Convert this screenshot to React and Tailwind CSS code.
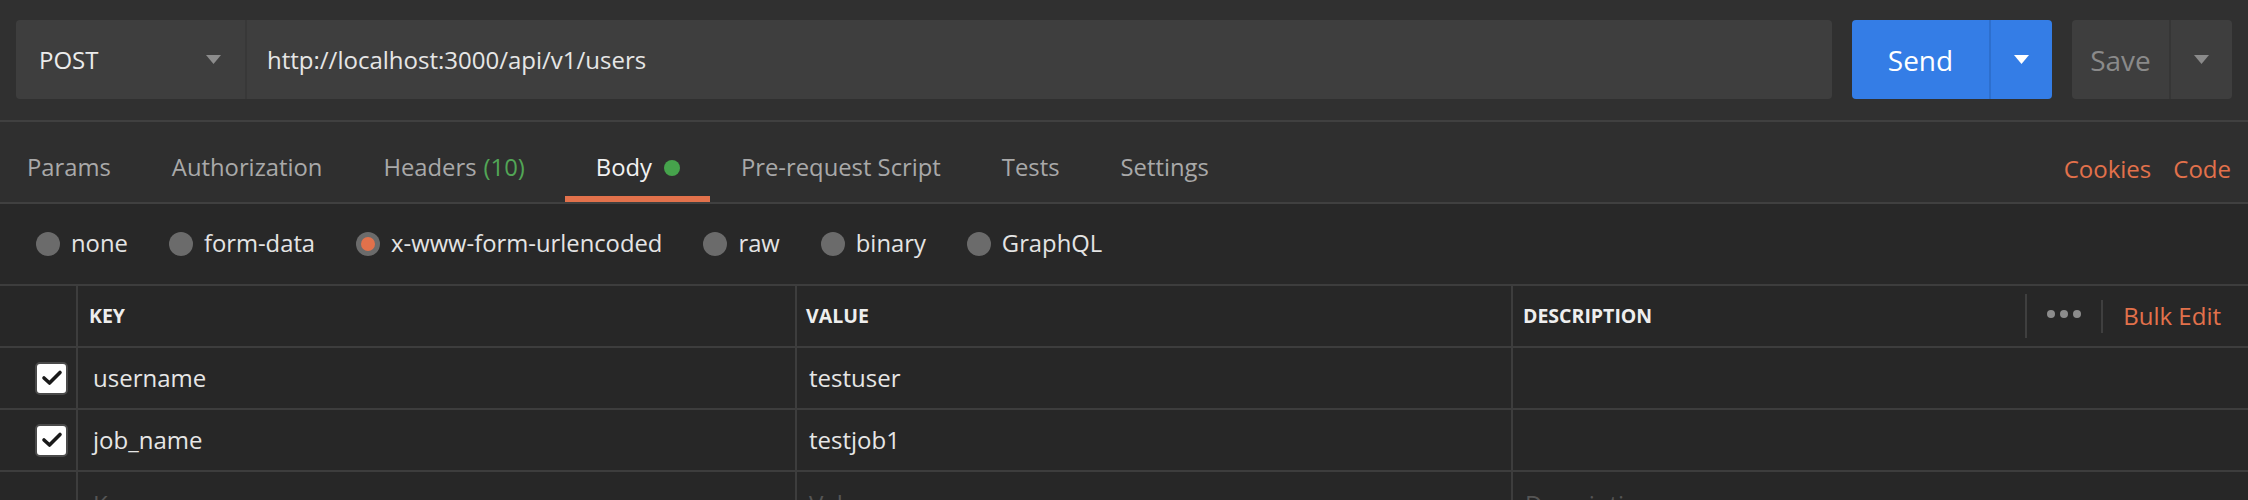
const tabs = [
  { label: 'Params' },
  { label: 'Authorization' },
  { label: 'Headers', count: '(10)' },
  { label: 'Body', active: true },
  { label: 'Pre-request Script' },
  { label: 'Tests' },
  { label: 'Settings' },
]

const bodyTypes = ['none', 'form-data', 'x-www-form-urlencoded', 'raw', 'binary', 'GraphQL']

const rows = [
  { key: 'username', value: 'testuser' },
  { key: 'job_name', value: 'testjob1' },
]

function Caret({ color }) {
  return (
    <svg width="15" height="9" viewBox="0 0 15 9">
      <polygon points="0,0 15,0 7.5,9" fill={color} />
    </svg>
  )
}

function Checkbox() {
  return (
    <div className="w-[33px] h-[33px] rounded-[5px] bg-white border-2 border-[#4a4a4a] flex items-center justify-center">
      <svg width="22" height="18" viewBox="0 0 22 18">
        <polyline points="3,9 8.5,14 19,3.5" fill="none" stroke="#1a1a1a" strokeWidth="3.6" strokeLinecap="round" strokeLinejoin="round" />
      </svg>
    </div>
  )
}

function Radio({ checked }) {
  return (
    <div className="w-[24px] h-[24px] rounded-full bg-[#6b6b6b] flex items-center justify-center">
      {checked && <div className="w-[14px] h-[14px] rounded-full bg-[#e2714b]" />}
    </div>
  )
}

export default function App() {
  return (
    <div className="w-[2248px] h-[500px] overflow-hidden bg-[#282828] text-[23.8px]" style={{ fontFamily: '"Open Sans", "Noto Sans", sans-serif' }}>
      {/* request bar */}
      <div className="h-[120px] bg-[#303030] flex items-start pt-[20px] px-[16px] gap-[20px]">
        <div className="flex-1 h-[79px] flex rounded-[4px] bg-[#3e3e3e]">
          <div className="w-[231px] flex items-center justify-between pl-[23px] pr-[24px] border-r-2 border-[#383838]">
            <span className="text-[#ececec] text-[24px]">POST</span>
            <Caret color="#8c8c8c" />
          </div>
          <div className="flex-1 flex items-center pl-[20px] text-[24px] text-[#e6e6e6]">http://localhost:3000/api/v1/users</div>
        </div>
        <div className="w-[200px] h-[79px] flex rounded-[4px] bg-[#347de6]">
          <div className="w-[139px] flex items-center justify-center text-[28px] text-white border-r-2 border-[#2d6fce]">Send</div>
          <div className="flex-1 flex items-center justify-center">
            <Caret color="#ffffff" />
          </div>
        </div>
        <div className="w-[160px] h-[79px] flex rounded-[4px] bg-[#3e3e3e]">
          <div className="w-[99px] flex items-center justify-center text-[28px] text-[#8a8a8a] border-r-2 border-[#363636]">Save</div>
          <div className="flex-1 flex items-center justify-center">
            <Caret color="#8a8a8a" />
          </div>
        </div>
      </div>

      {/* tabs */}
      <div className="h-[84px] bg-[#2f2f2f] border-t-2 border-b-2 border-[#404040] flex items-center justify-between pl-[27px] pr-[17px]">
        <div className="flex items-stretch h-full gap-[61px]">
          {tabs.map((t) => (
            <div key={t.label} className={`relative flex items-center pt-[12px] ${t.active ? 'ml-[10px] text-[#f2f2f2]' : 'text-[#a9a9a9]'}`}>
              <span>{t.label}</span>
              {t.count && <span className="ml-[7px] text-[#52a656]">{t.count}</span>}
              {t.active && <span className="ml-[12px] w-[16px] h-[16px] rounded-full bg-[#46a34c]" />}
              {t.active && <div className="absolute -left-[31px] -right-[30px] bottom-0 h-[6px] bg-[#e2714b]" />}
            </div>
          ))}
        </div>
        <div className="flex items-center gap-[22px] pt-[14px] text-[24px] text-[#e2714b]">
          <span>Cookies</span>
          <span>Code</span>
        </div>
      </div>

      {/* body types */}
      <div className="h-[80px] flex items-center pl-[36px] gap-[41px]">
        {bodyTypes.map((b, i) => (
          <div key={b} className="flex items-center gap-[11px]">
            <Radio checked={i === 2} />
            <span className="text-[#e4e4e4]">{b}</span>
          </div>
        ))}
      </div>

      {/* key/value table */}
      <div className="border-t-2 border-[#3d3d3d] bg-[#272727]">
        <div className="grid grid-cols-[76px_719px_716px_1fr] h-[62px] border-b-2 border-[#3d3d3d] text-[19.5px] font-bold text-[#eeeeee]">
          <div />
          <div className="border-l-2 border-[#3d3d3d] flex items-center pl-[11px]">KEY</div>
          <div className="border-l-2 border-[#3d3d3d] flex items-center pl-[9px]">VALUE</div>
          <div className="border-l-2 border-[#3d3d3d] flex items-center justify-between pl-[10px] pr-[27px]">
            <span>DESCRIPTION</span>
            <div className="flex items-center h-full">
              <div className="w-[2px] h-[44px] bg-[#3f3f3f]" />
              <div className="flex items-center gap-[5px] px-[20px] pb-[4px]">
                <span className="w-[8px] h-[8px] rounded-full bg-[#8c8c8c]" />
                <span className="w-[8px] h-[8px] rounded-full bg-[#8c8c8c]" />
                <span className="w-[8px] h-[8px] rounded-full bg-[#8c8c8c]" />
              </div>
              <div className="w-[2px] h-[33px] bg-[#3f3f3f]" />
              <span className="ml-[20px] text-[24px] font-normal text-[#e2714b]">Bulk Edit</span>
            </div>
          </div>
        </div>
        {rows.map((r) => (
          <div key={r.key} className="grid grid-cols-[76px_719px_716px_1fr] h-[62px] border-b-2 border-[#3d3d3d] text-[24px] text-[#e6e6e6]">
            <div className="flex items-center justify-end pr-[8px]">
              <Checkbox />
            </div>
            <div className="border-l-2 border-[#3d3d3d] flex items-center pl-[15px]">{r.key}</div>
            <div className="border-l-2 border-[#3d3d3d] flex items-center pl-[12px]">{r.value}</div>
            <div className="border-l-2 border-[#3d3d3d]" />
          </div>
        ))}
        <div className="grid grid-cols-[76px_719px_716px_1fr] h-[62px] text-[24px] text-[#555555]">
          <div />
          <div className="border-l-2 border-[#3d3d3d] flex items-start pt-[14px] pl-[15px]">Key</div>
          <div className="border-l-2 border-[#3d3d3d] flex items-start pt-[14px] pl-[12px]">Value</div>
          <div className="border-l-2 border-[#3d3d3d] flex items-start pt-[14px] pl-[12px]">Description</div>
        </div>
      </div>
    </div>
  )
}
